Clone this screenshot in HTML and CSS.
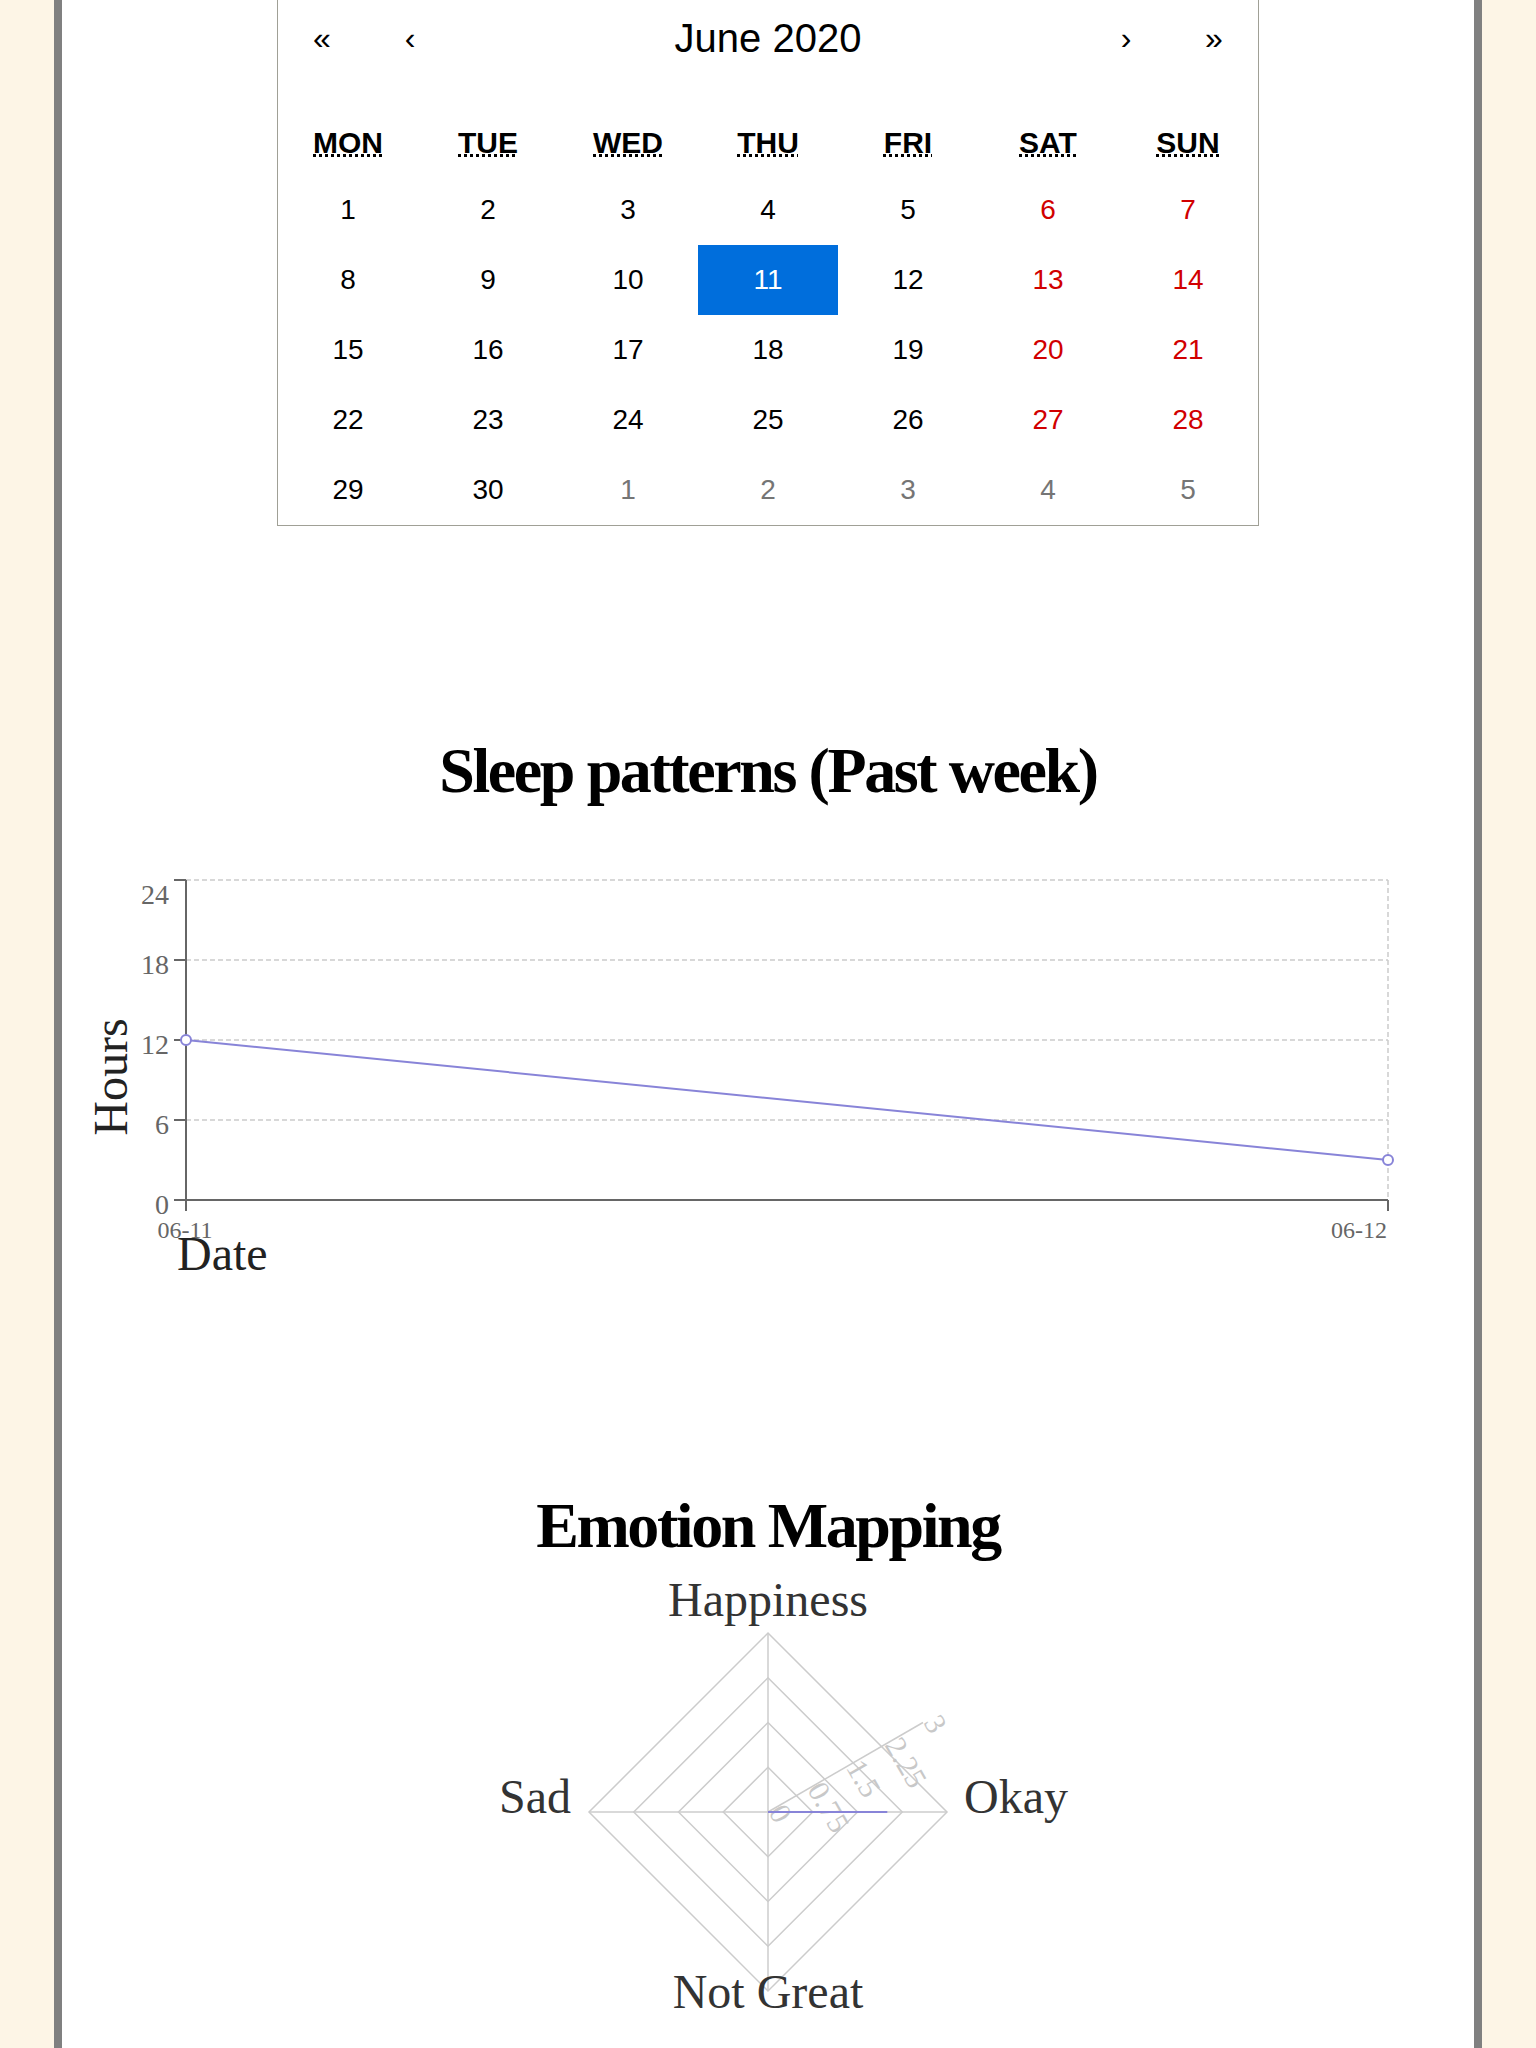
FILE: index.html
```html
<!DOCTYPE html>
<html lang="en">
<head>
<meta charset="utf-8">
<title>Journal</title>
<link rel="stylesheet" href="styles.css">
</head>
<body>
<div class="panel">
  <div class="calendar">
    <div class="cal-nav">
      <button class="nav-btn">«</button>
      <button class="nav-btn">‹</button>
      <button class="nav-label">June 2020</button>
      <button class="nav-btn">›</button>
      <button class="nav-btn">»</button>
    </div>
    <div class="weekdays">
      <div class="wd"><abbr title="Monday">Mon</abbr></div>
      <div class="wd"><abbr title="Tuesday">Tue</abbr></div>
      <div class="wd"><abbr title="Wednesday">Wed</abbr></div>
      <div class="wd"><abbr title="Thursday">Thu</abbr></div>
      <div class="wd"><abbr title="Friday">Fri</abbr></div>
      <div class="wd"><abbr title="Saturday">Sat</abbr></div>
      <div class="wd"><abbr title="Sunday">Sun</abbr></div>
    </div>
    <div class="days">
      <div class="tile">1</div><div class="tile">2</div><div class="tile">3</div><div class="tile">4</div><div class="tile">5</div><div class="tile weekend">6</div><div class="tile weekend">7</div>
      <div class="tile">8</div><div class="tile">9</div><div class="tile">10</div><div class="tile active">11</div><div class="tile">12</div><div class="tile weekend">13</div><div class="tile weekend">14</div>
      <div class="tile">15</div><div class="tile">16</div><div class="tile">17</div><div class="tile">18</div><div class="tile">19</div><div class="tile weekend">20</div><div class="tile weekend">21</div>
      <div class="tile">22</div><div class="tile">23</div><div class="tile">24</div><div class="tile">25</div><div class="tile">26</div><div class="tile weekend">27</div><div class="tile weekend">28</div>
      <div class="tile">29</div><div class="tile">30</div><div class="tile other">1</div><div class="tile other">2</div><div class="tile other">3</div><div class="tile other">4</div><div class="tile other">5</div>
    </div>
  </div>

  <h2 class="section-title first">Sleep patterns (Past week)</h2>
  <svg class="line-chart" width="1412" height="480" viewBox="0 0 1412 480">
    <g class="grid">
      <line x1="124" y1="69" x2="1326" y2="69"/>
      <line x1="124" y1="149" x2="1326" y2="149"/>
      <line x1="124" y1="229" x2="1326" y2="229"/>
      <line x1="124" y1="309" x2="1326" y2="309"/>
      <line x1="1326" y1="69" x2="1326" y2="389"/>
    </g>
    <g class="axis">
      <line x1="124" y1="69" x2="124" y2="389"/>
      <line x1="112" y1="69" x2="124" y2="69"/>
      <line x1="112" y1="149" x2="124" y2="149"/>
      <line x1="112" y1="229" x2="124" y2="229"/>
      <line x1="112" y1="309" x2="124" y2="309"/>
      <line x1="112" y1="389" x2="124" y2="389"/>
      <line x1="124" y1="389" x2="1326" y2="389"/>
      <line x1="124" y1="389" x2="124" y2="400"/>
      <line x1="1326" y1="389" x2="1326" y2="400"/>
    </g>
    <g class="tick-label y-ticks">
      <text x="107" y="93" text-anchor="end">24</text>
      <text x="107" y="163" text-anchor="end">18</text>
      <text x="107" y="243" text-anchor="end">12</text>
      <text x="107" y="323" text-anchor="end">6</text>
      <text x="107" y="403" text-anchor="end">0</text>
    </g>
    <g class="tick-label">
      <text x="123" y="427" text-anchor="middle">06-11</text>
      <text x="1325" y="427" text-anchor="end">06-12</text>
    </g>
    <text class="axis-title" transform="translate(65,266) rotate(-90)" text-anchor="middle">Hours</text>
    <text class="axis-title" x="115" y="459">Date</text>
    <line class="data-line" x1="124" y1="229" x2="1326" y2="349"/>
    <circle class="dot" cx="124" cy="229" r="5"/>
    <circle class="dot" cx="1326" cy="349" r="5"/>
  </svg>

  <h2 class="section-title second">Emotion Mapping</h2>
  <svg class="radar" width="1412" height="482" viewBox="0 0 1412 482">
    <g class="polar-grid">
      <polygon points="706,67 885,246 706,425 527,246"/>
      <polygon points="706,111.75 840.25,246 706,380.25 571.75,246"/>
      <polygon points="706,156.5 795.5,246 706,335.5 616.5,246"/>
      <polygon points="706,201.25 750.75,246 706,290.75 661.25,246"/>
      <line x1="706" y1="246" x2="706" y2="67"/>
      <line x1="706" y1="246" x2="885" y2="246"/>
      <line x1="706" y1="246" x2="706" y2="425"/>
      <line x1="706" y1="246" x2="527" y2="246"/>
      <line x1="706" y1="246" x2="861" y2="156.5"/>
    </g>
    <g class="radius-tick">
      <text x="706" y="246" transform="rotate(60 706 246)">0</text>
      <text x="744.75" y="223.6" transform="rotate(60 744.75 223.6)">0.75</text>
      <text x="783.5" y="201.25" transform="rotate(60 783.5 201.25)">1.5</text>
      <text x="822.3" y="178.9" transform="rotate(60 822.3 178.9)">2.25</text>
      <text x="861" y="156.5" transform="rotate(60 861 156.5)">3</text>
    </g>
    <line class="radar-data" x1="706" y1="246" x2="825.3" y2="246"/>
    <g class="angle-label">
      <text x="706" y="50" text-anchor="middle">Happiness</text>
      <text x="902" y="247" text-anchor="start">Okay</text>
      <text x="706" y="442" text-anchor="middle">Not Great</text>
      <text x="509" y="247" text-anchor="end">Sad</text>
    </g>
  </svg>
</div>
</body>
</html>
```

FILE: styles.css
```css
html, body {
  margin: 0;
  padding: 0;
  overflow: hidden;
}

body {
  background: #fdf5e6;
  font-family: "Liberation Serif", "Times New Roman", serif;
}

.panel {
  margin: 0 54px;
  height: 2048px;
  background: #ffffff;
  border-left: 8px solid #808080;
  border-right: 8px solid #808080;
  overflow: hidden;
}

/* Calendar */
.calendar {
  width: 980px;
  margin: 0 auto;
  border: 1px solid #a0a096;
  border-top: none;
  font-family: "Liberation Sans", Arial, sans-serif;
  color: #000;
  background: #fff;
}

.cal-nav {
  display: flex;
  height: 76px;
}

.cal-nav button {
  border: none;
  background: none;
  padding: 0;
  margin: 0;
  font-family: inherit;
  color: #000;
  height: 76px;
}

.nav-btn {
  width: 88px;
  font-size: 32px;
}

.nav-label {
  flex: 1;
  font-size: 40px;
}

.weekdays {
  display: grid;
  grid-template-columns: repeat(7, 140px);
  height: 65px;
  margin-top: 34px;
}

.wd {
  display: flex;
  align-items: center;
  justify-content: center;
  font-weight: bold;
  font-size: 30px;
  text-transform: uppercase;
}

.wd abbr {
  text-decoration: underline dotted;
  text-underline-offset: 1px;
}

.days {
  display: grid;
  grid-template-columns: repeat(7, 140px);
  grid-auto-rows: 70px;
}

.tile {
  display: flex;
  align-items: center;
  justify-content: center;
  font-size: 28px;
  color: #000;
}

.tile.weekend {
  color: #d10000;
}

.tile.other {
  color: #757575;
}

.tile.active {
  background: #006edc;
  color: #ffffff;
}

/* Section headings */
.section-title {
  margin: 0;
  text-align: center;
  font-family: "Liberation Serif", "Times New Roman", serif;
  font-weight: bold;
  font-size: 64px;
  letter-spacing: -2.4px;
  line-height: 80px;
  color: #000;
}

.section-title.first {
  margin-top: 205px;
}

.section-title.second {
  margin-top: 195px;
}

/* Line chart */
.line-chart,
.radar {
  display: block;
}

.grid line {
  stroke: #cccccc;
  stroke-width: 1.5;
  stroke-dasharray: 5 3;
}

.axis line {
  stroke: #666666;
  stroke-width: 2;
}

.tick-label text {
  font-family: "Liberation Serif", "Times New Roman", serif;
  font-size: 24px;
  fill: #666666;
}

.y-ticks text {
  font-size: 28px;
}

.axis-title {
  font-family: "Liberation Serif", "Times New Roman", serif;
  font-size: 48px;
  fill: #222222;
}

.data-line {
  stroke: #8884d8;
  stroke-width: 2;
}

.dot {
  fill: #ffffff;
  stroke: #8884d8;
  stroke-width: 2;
}

/* Radar */
.polar-grid polygon,
.polar-grid line {
  fill: none;
  stroke: #cccccc;
  stroke-width: 1.5;
}

.radius-tick text {
  font-family: "Liberation Serif", "Times New Roman", serif;
  font-size: 30px;
  fill: #c8c8c8;
}

.radar-data {
  stroke: #8884d8;
  stroke-width: 2;
}

.angle-label text {
  font-family: "Liberation Serif", "Times New Roman", serif;
  font-size: 48px;
  fill: #333333;
}
```
